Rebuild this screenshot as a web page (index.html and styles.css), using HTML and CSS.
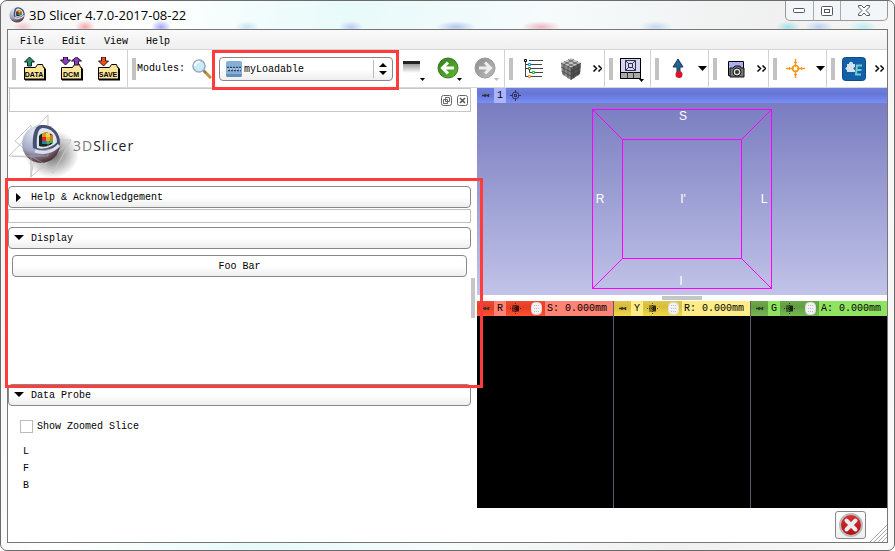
FILE: index.html
```html
<!DOCTYPE html>
<html lang="en">
<head>
<meta charset="utf-8">
<title>3D Slicer 4.7.0-2017-08-22</title>
<link rel="stylesheet" href="styles.css">
</head>
<body>
<svg class="defs" aria-hidden="true">
  <defs>
    <linearGradient id="green" x1="0" y1="0" x2="1" y2="1"><stop offset="0" stop-color="#2f7d1c"/><stop offset="1" stop-color="#62bd2e"/></linearGradient>
    <linearGradient id="gray" x1="0" y1="0" x2="1" y2="1"><stop offset="0" stop-color="#8c8c8c"/><stop offset="1" stop-color="#bcbcbc"/></linearGradient>
    <radialGradient id="ball" cx=".35" cy=".2" r=".9"><stop offset="0" stop-color="#e6eaf6"/><stop offset=".55" stop-color="#a2a8c6"/><stop offset=".85" stop-color="#5d4047"/><stop offset="1" stop-color="#33262e"/></radialGradient>
    <radialGradient id="shade"><stop offset="0" stop-color="#000" stop-opacity=".6"/><stop offset="1" stop-color="#000" stop-opacity="0"/></radialGradient>
    <linearGradient id="red" x1="0" y1="0" x2="0" y2="1"><stop offset="0" stop-color="#d8343a"/><stop offset="1" stop-color="#b30d12"/></linearGradient>
    <linearGradient id="bars" x1="0" y1="0" x2="0" y2="1"><stop offset="0" stop-color="#777"/><stop offset="1" stop-color="#fff"/></linearGradient>
    <g id="folder">
      <path d="M1.500 10.500h11l2-3h5l1 3h1v12h-20z" fill="#fbe59a" stroke="#000"/>
      <path d="M2 22.500h20v-11" fill="none" stroke="#000" stroke-width="2"/>
    </g>
    <g id="pin"><path d="M0 3.500h2M2 3.500h5M3 2v3M6.500 2v3" stroke="#333" fill="none" stroke-width="1.500"/></g>
    <g id="target"><rect x="2.500" y="2.500" width="6" height="6" rx="2" fill="none" stroke="#2b3358"/><rect x="4.500" y="4.500" width="2" height="2" fill="none" stroke="#2b3358"/><path d="M5.500 0v2M5.500 9v2M0 5.500h2M9 5.500h2" stroke="#2b3358"/></g>
    <g id="link"><path d="M5.500 0v11M0 5.500h11" stroke="#000" opacity=".6" stroke-dasharray="1 1"/><rect x="2" y="2" width="7" height="7" rx="1" fill="#000" opacity=".4"/><path d="M6 3h3v5H6z" fill="#000" opacity=".6"/></g>
    <g id="eye"><rect x=".5" y=".5" width="10" height="12" rx="4" fill="#f2f2f2" stroke="#ddd"/><path d="M3 3.500h6M3 6.500h6M3 9.500h6" stroke="#bbb" stroke-dasharray="1 1"/></g>
    <g id="logo">
      <circle cx="20" cy="20" r="19" fill="url(#ball)"/>
      <path d="M12 24C11 12 13 2 20 1c11-1 19 7 19 18-5 6-18 9-27 5z" fill="#465070"/>
      <path d="M16 24C15 12 17 5 21 4c9 0 15 6 15 14-4 5-13 8-20 6z" fill="#dfe5ee"/>
      <path d="M18 22V12c3-4 10-5 14 0v7c-3 3-10 5-14 3z" fill="#17291e"/>
      <path d="M21 9h4v4h-4z" fill="#d89b18"/><path d="M25 9h4v4h-4z" fill="#f8d52b"/><path d="M29 11h3v4h-3z" fill="#e57324"/><path d="M21 13h4v4h-4z" fill="#e42522"/><path d="M25 13h4v4h-4z" fill="#f1a021"/><path d="M29 15h3v4h-3z" fill="#68a927"/><path d="M21 17h4v3h-4z" fill="#237db6"/><path d="M25 17h4v3h-4z" fill="#38a05b"/>
      <path d="M14 27c8 3 18 1 24-6" fill="none" stroke="#dbe0ef" stroke-width="3"/>
    </g>
  </defs>
</svg>

<div class="window">
  <header class="titlebar">
    <svg class="app-icon" width="16" height="16" viewBox="0 0 40 40"><use href="#logo"/></svg>
    <h1>3D Slicer 4.7.0-2017-08-22</h1>
    <div class="caption">
      <button aria-label="Minimize"><svg width="13" height="6"><rect x=".5" y=".5" width="11" height="4" rx="1" fill="#fff" stroke="#556"/></svg></button>
      <button aria-label="Maximize"><svg width="12" height="10"><rect x=".5" y=".5" width="11" height="9" rx="1" fill="#fff" stroke="#556"/><rect x="3.500" y="3.500" width="5" height="3" fill="#fff" stroke="#556"/></svg></button>
      <button class="wide" aria-label="Close"><svg width="12" height="11"><path d="M.5.5h3L6 3 8.500.5h3v1.500L8 5.500l3.500 3.500v1.500h-3L6 8l-2.500 2.500h-3V9L4 5.500.5 2z" fill="#fff" stroke="#556"/></svg></button>
    </div>
  </header>

  <div class="client">
    <nav class="menubar"><button>File</button><button>Edit</button><button>View</button><button>Help</button></nav>

    <div class="toolbar">
      <div class="group">
        <i class="handle"></i>
        <button class="tool" aria-label="Load data"><svg width="24" height="24"><use href="#folder"/><path d="M6.500 0l5 5h-3v4h-4V5h-3z" fill="#23905a" stroke="#123"/><text x="11" y="20" class="tag">DATA</text></svg></button>
        <button class="tool" aria-label="DICOM"><svg width="24" height="24"><use href="#folder"/><path d="M5.500 8l-5-5h3V0h4v3h3zM16.500 0l5 4h-3v4h-4V4h-3z" fill="#8a3fc0" stroke="#213"/><text x="11" y="20" class="tag">DCM</text></svg></button>
        <button class="tool" aria-label="Save"><svg width="24" height="24"><use href="#folder"/><path d="M6.500 9l-5-5h3V0h4v4h3z" fill="#e8531c" stroke="#411"/><text x="11" y="20" class="tag">SAVE</text></svg></button>
      </div>

      <div class="group modules">
        <i class="handle"></i>
        <label for="module">Modules:</label>
        <button class="tool find" aria-label="Find module"><svg width="20" height="20"><path d="M12 12l7 7" stroke="#d08b35" stroke-width="3"/><path d="M11 11l3 3" stroke="#777" stroke-width="2"/><circle cx="7" cy="7" r="6" fill="#c9eafa" stroke="#9aaab5" stroke-width="1.500"/><path d="M3 7a4 4 0 0 1 5-4" stroke="#fff" stroke-width="2" fill="none"/></svg></button>
        <div class="combo">
          <select id="module"><option>myLoadable</option></select>
          <svg class="combo-icon" width="16" height="16"><rect width="16" height="16" rx="2" fill="#86afd8"/><path d="M0 13h16v1a2 2 0 0 1-2 2H2a2 2 0 0 1-2-2z" fill="#638fbd"/><path d="M1 6.500h14M2 9.500h13" stroke="#29425f" stroke-width="1.500" stroke-dasharray="2 1"/><path d="M1 8h14" stroke="#dbe7f2" stroke-dasharray="2 1"/></svg>
          <svg class="combo-arrows" width="14" height="18"><path d="M.5 0v18" stroke="#bbb"/><path d="M6 7l4-4 4 4zM6 11l4 4 4-4z"/></svg>
          <div class="mark mark-combo"></div>
        </div>
        <button class="tool" aria-label="Module history"><svg width="26" height="26"><path d="M4 5h17v12H4z" fill="url(#bars)"/><path d="M4 5h17v3H4z" fill="#222"/><path d="M21 22h5l-2.500 3z"/></svg></button>
        <button class="tool" aria-label="Previous module"><svg width="26" height="26"><circle cx="12" cy="12" r="10" fill="url(#green)" stroke="#347827"/><path d="M18 12H7M12 6.500L6.500 12l5.500 5.500" fill="none" stroke="#fff" stroke-width="3"/><path d="M21 22h5l-2.500 3z"/></svg></button>
        <button class="tool" aria-label="Next module"><svg width="26" height="26"><circle cx="12" cy="12" r="10" fill="url(#gray)" stroke="#999"/><path d="M6 12h11M12 6.500l5.500 5.500-5.500 5.500" fill="none" stroke="#eee" stroke-width="3"/><path d="M21 22h5l-2.500 3z" fill="#bbb"/></svg></button>
      </div>

      <div class="group spaced">
        <i class="handle"></i>
        <button class="tool" aria-label="Subject hierarchy"><svg width="20" height="20"><path d="M2.500 3v14.500M2 5.500h4M2 9.500h4M6.500 10v3.500H9M2 17.500h4M6 1.500h14M8 5.500h11M8 9.500h12M11 13.500h9M8 17.500h11" stroke="#444" fill="none"/><g fill="#fff"><path d="M1.500.5h2v2h-2z" stroke="#000"/><path d="M5.500 4.500h2v2h-2z" stroke="#168be0"/><path d="M5.500 8.500h2v2h-2z" stroke="#16872b"/><path d="M9.500 12.500h2v2h-2z" stroke="#24b632"/><path d="M5.500 16.500h2v2h-2z" stroke="#f08a16"/></g></svg></button>
        <button class="tool" aria-label="Volume rendering"><svg width="22" height="24"><path d="M1 6l10-5 10 5-10 5z" fill="#c4c4c4"/><path d="M1 6l10 5v12L2 17z" fill="#8a8a8a"/><path d="M21 6l-10 5v12l9-6z" fill="#555"/><path d="M4 4.500l10 5v12M8 2.500l10 5v11M18 4.500l-10 5v12M14 2.500l-10 5v11M1 10l10 5 10-5M1.500 14l9.500 5 9.500-5M1 6l10 5 10-5M11 11v12" fill="none" stroke="#333" stroke-width=".6"/></svg></button>
        <button class="more" aria-label="More"><svg width="9" height="7"><path d="M.5.500l3 3-3 3M5.500.500l3 3-3 3" fill="none" stroke="#000" stroke-width="1.500"/></svg></button>
      </div>

      <div class="group">
        <i class="handle"></i>
        <button class="tool" aria-label="Layout"><svg width="25" height="26"><rect x="1.500" y="2.500" width="20" height="20" fill="#d4d5f4" stroke="#000"/><path d="M1.500 16.500h20v6h-20z" fill="#aaa" stroke="#000"/><path d="M8.500 16v6M14.500 16v6M6.500 4.500h10v10h-10zM9.500 7.500h4v4h-4zM6.500 4.500l3 3M16.500 4.500l-3 3M6.500 14.500l3-3M16.500 14.500l-3-3" fill="none" stroke="#334"/><path d="M20 23h5l-2.500 3z"/></svg></button>
      </div>

      <div class="group">
        <i class="handle"></i>
        <button class="tool" aria-label="Place fiducial"><svg width="14" height="20"><path d="M7 0l5 8H9v7H6V8H2z" fill="#24618c" stroke="#173d59"/><circle cx="8" cy="15.500" r="3.500" fill="#d9142b"/></svg></button>
        <button class="more drop" aria-label="Place options"><svg width="9" height="5"><path d="M0 0h9L4.500 5z"/></svg></button>
      </div>

      <div class="group">
        <i class="handle"></i>
        <button class="tool" aria-label="Capture"><svg width="18" height="18"><path d="M1.500 1.500h15v14h-15z" fill="#a9b0eb" stroke="#000"/><path d="M3 8h3l2-2h5l1 2h3v9H3z" fill="#777" stroke="#111"/><circle cx="10" cy="12" r="4" fill="#ddd" stroke="#111"/><circle cx="10" cy="12" r="2" fill="#333"/></svg></button>
        <button class="more" aria-label="More"><svg width="9" height="7"><path d="M.5.500l3 3-3 3M5.500.500l3 3-3 3" fill="none" stroke="#000" stroke-width="1.500"/></svg></button>
      </div>

      <div class="group">
        <i class="handle"></i>
        <button class="tool" aria-label="Crosshair"><svg width="19" height="20"><path d="M9.500 0v8M9.500 11v8M0 9.500h8M11 9.500h8" stroke="#f39a1e" stroke-width="1.500"/><path d="M8 3.500h3M8 15.500h3M3.500 8v3M15.500 8v3" stroke="#f39a1e"/><circle cx="9.500" cy="9.500" r="3" fill="none" stroke="#f39a1e" stroke-width="1.500"/></svg></button>
        <button class="more drop" aria-label="Crosshair options"><svg width="9" height="5"><path d="M0 0h9L4.500 5z"/></svg></button>
      </div>

      <div class="group last">
        <i class="handle"></i>
        <button class="tool" aria-label="Extensions"><svg width="24" height="24"><rect x=".5" y=".5" width="23" height="23" rx="3" fill="#1160a8" stroke="#0b4b8b"/><path d="M5 7h2c0-3 4-3 4 0h2v3c-2 0-2 3 0 3v2H5v-2c-2 0-2-3 0-3z" fill="#d7e2ea"/><path d="M20 8.500h-5l-1 9h5M14.500 13h5" stroke="#73cbd0" stroke-width="2" fill="none"/></svg></button>
        <button class="more" aria-label="More"><svg width="9" height="7"><path d="M.5.500l3 3-3 3M5.500.500l3 3-3 3" fill="none" stroke="#000" stroke-width="1.500"/></svg></button>
      </div>
    </div>

    <main class="workspace">
      <section class="panel">
        <div class="dock-title">
          <button aria-label="Float"><svg width="11" height="11"><rect x=".5" y=".5" width="10" height="10" rx="2" fill="#fff" stroke="#666"/><path d="M4.500 2.500h4v4h-4zM2.500 4.500h4v4h-4z" fill="#fff" stroke="#666"/></svg></button>
          <button aria-label="Close panel"><svg width="11" height="11"><rect x=".5" y=".5" width="10" height="10" rx="2" fill="#fff" stroke="#666"/><path d="M3 3l5 5M8 3l-5 5" stroke="#555" stroke-width="1.500"/></svg></button>
        </div>
        <div class="brand">
          <svg width="64" height="66" viewBox="0 0 64 66">
            <ellipse cx="43" cy="41" rx="27" ry="24" fill="url(#shade)"/>
            <path d="M0 43L39 2v43zM22 64V12L6 28l38 32 18-33H28zM22 64l38-35" fill="none" stroke="#c7c7c7"/>
            <use href="#logo" x="12" y="11"/>
            <path d="M3 43h36V21M22 64V43l22 13 10-12" fill="none" stroke="#bbb" opacity=".5"/>
          </svg>
          <span><span class="thin">3D</span><b>Slicer</b></span>
        </div>
        <div class="module">
          <button class="section"><svg width="10" height="10"><path d="M2 0v9l5-4.500z"/></svg>Help &amp; Acknowledgement</button>
          <div class="collapsed"></div>
          <button class="section"><svg width="10" height="10"><path d="M0 1h10L5 6z"/></svg>Display</button>
          <div class="section-body"><button class="foo">Foo Bar</button></div>
          <div class="mark mark-module"></div>
        </div>
        <div class="probe">
          <button class="section"><svg width="10" height="10"><path d="M0 1h10L5 6z"/></svg>Data Probe</button>
          <label class="check"><input type="checkbox">Show Zoomed Slice</label>
          <ul><li>L</li><li>F</li><li>B</li></ul>
        </div>
      </section>

      <div class="splitter"></div>

      <section class="views">
        <div class="threed">
          <div class="view-bar">
            <span class="cell"><svg width="8" height="7"><use href="#pin"/></svg></span>
            <span class="name">1</span>
            <svg width="11" height="11"><use href="#target"/></svg>
          </div>
          <div class="scene">
            <svg width="182" height="182" viewBox="0 0 182 182">
              <path d="M1.500 1.500h179v179H1.500zM31.500 31.500h119v119h-119z" class="edge"/>
              <path d="M1.500 1.500l30 30M180.500 1.500l-30 30M1.500 180.500l30-30M180.500 180.500l-30-30" class="edge"/>
              <text x="92" y="12">S</text><text x="9" y="95">R</text><text x="173" y="95">L</text><text x="92" y="95">I'</text><text x="90" y="177">I</text>
            </svg>
          </div>
        </div>
        <div class="hsplitter"></div>
        <div class="slices">
          <div class="slice r"><div class="slice-bar"><span class="cell"><svg width="8" height="7"><use href="#pin"/></svg></span><span class="name">R</span><span class="icons"><svg width="11" height="11"><use href="#link"/></svg><svg width="11" height="13"><use href="#eye"/></svg></span><span class="value">S: 0.000mm</span></div></div>
          <div class="slice y"><div class="slice-bar"><span class="cell"><svg width="8" height="7"><use href="#pin"/></svg></span><span class="name">Y</span><span class="icons"><svg width="11" height="11"><use href="#link"/></svg><svg width="11" height="13"><use href="#eye"/></svg></span><span class="value">R: 0.000mm</span></div></div>
          <div class="slice g"><div class="slice-bar"><span class="cell"><svg width="8" height="7"><use href="#pin"/></svg></span><span class="name">G</span><span class="icons"><svg width="11" height="11"><use href="#link"/></svg><svg width="11" height="13"><use href="#eye"/></svg></span><span class="value">A: 0.000mm</span></div></div>
        </div>
      </section>
    </main>

    <footer class="status">
      <button class="errors" aria-label="Error log"><svg width="26" height="26"><circle cx="13" cy="13" r="11" fill="url(#red)" stroke="#bbb" stroke-width="2"/><path d="M8.500 8.500l9 9M17.500 8.500l-9 9" stroke="#eee" stroke-width="4" stroke-linecap="round"/></svg></button>
      <svg class="grip" width="17" height="17"><path d="M0 17L17 0M4 17L17 4M8 17l9-9M12 17l5-5" stroke="#aaa"/></svg>
    </footer>
  </div>
</div>
</body>
</html>
```
FILE: styles.css
```css
* { box-sizing: border-box; }
body { margin: 0; font: 10px/12px "Liberation Mono", monospace; color: #000; }
button, select, input { font: inherit; color: inherit; margin: 0; }
button { padding: 0; border: 0; background: none; display: flex; align-items: center; justify-content: center; }
svg { display: block; flex: none; }
.defs { position: absolute; width: 0; height: 0; }

.window {
  height: 100vh; display: flex; flex-direction: column;
  padding: 0 6px 7px; border: 1px solid #6b6b6b; border-radius: 7px;
  background:
    radial-gradient(ellipse 10px 7px at 84px 26px, #f3a7ac, transparent),
    radial-gradient(ellipse 10px 7px at 160px 26px, #a5a8f6, transparent),
    radial-gradient(ellipse 10px 6px at 22px 26px, #f0c6cf, transparent),
    radial-gradient(ellipse 12px 6px at 246px 26px, #c8e4f4, transparent),
    radial-gradient(ellipse 12px 6px at 350px 26px, #bccdf4, transparent),
    radial-gradient(ellipse 20px 6px at 455px 26px, #b5c7ed, transparent),
    radial-gradient(ellipse 20px 6px at 540px 26px, #edb7c4, transparent),
    radial-gradient(ellipse 16px 6px at 655px 26px, #c5d8f4, transparent),
    radial-gradient(ellipse 12px 6px at 787px 26px, #a3e1e8, transparent),
    radial-gradient(ellipse 14px 6px at 818px 26px, #bcd0f2, transparent),
    radial-gradient(ellipse 14px 6px at 862px 26px, #b7edf2, transparent),
    linear-gradient(100deg, #f2f2f2 0, #fff 15%, #e8fafa 35%, #f6fbfc 55%, #f0f0f0 78%, #fafafa 100%);
}
.titlebar { flex: none; height: 28px; display: flex; align-items: center; padding-left: 2px; }
.titlebar h1 { flex: 1; margin: 0 0 0 4px; font: 13px/16px "Open Sans", sans-serif; }
.caption { align-self: flex-start; display: flex; border: 1px solid #999; border-top: 0; border-radius: 0 0 5px 5px; background: #f3f6f8; }
.caption button { width: 27px; height: 19px; border-left: 1px solid #aaa; }
.caption button:first-child { border-left: 0; }
.caption .wide { width: 47px; }

.client { flex: 1; min-height: 0; display: flex; flex-direction: column; border: 1px solid #777; background: #fff; }
.menubar { flex: none; height: 20px; display: flex; gap: 18px; padding: 4px 0 0 12px; background: linear-gradient(#fafafa, #efefef); border-bottom: 1px solid #d5d5d5; }

.toolbar { flex: none; height: 38px; display: flex; border-bottom: 1px solid #d8d8d8; }
.group { display: flex; align-items: center; padding-left: 4px; border-right: 1px solid #d2d2d2; }
.group.last { border-right: 0; padding-right: 1px; }
.group.spaced { gap: 1px; }
.group.modules { flex: 1; }
.handle { width: 4px; height: 22px; background: #c2c2c2; }
.tool { width: 37px; height: 36px; }
.tool.find { width: 34px; }
.more { width: 14px; height: 36px; }
.more.drop { width: 12px; }
.tag { font: bold 7px "Liberation Sans", sans-serif; text-anchor: middle; }
.modules label { margin-left: 1px; }
.combo { position: relative; flex: 1; height: 24px; }
.combo select { width: 100%; height: 24px; padding: 2px 20px 0 24px; appearance: none; border: 1px solid #888; border-radius: 4px; background: linear-gradient(#fff 50%, #eee); }
.combo-icon { position: absolute; left: 7px; top: 4px; }
.combo-arrows { position: absolute; right: 6px; top: 3px; }
.mark { position: absolute; border: 3px solid #ff3b3b; pointer-events: none; }
.mark-combo { inset: -7px -6px -9px -7px; }

.workspace { flex: 1; min-height: 0; display: grid; grid-template-columns: 463fr 6px 410fr; }
.panel { display: flex; flex-direction: column; }
.dock-title { flex: none; height: 24px; margin-left: 1px; padding-right: 2px; display: flex; align-items: center; justify-content: flex-end; gap: 5px; border: 1px solid #c6c6c6; }
.brand { flex: none; height: 66px; display: flex; align-items: center; margin: 1px 0 7px 1px; font: 14px/18px "Open Sans", sans-serif; letter-spacing: 1px; color: #222; }
.brand svg { overflow: visible; }
.brand b { font-weight: 500; }
.brand .thin { color: #777; }
.module { position: relative; flex: 1; }
.section { width: 100%; height: 22px; padding: 1px 5px 0; justify-content: flex-start; gap: 7px; border: 1px solid #888; border-radius: 4px; background: linear-gradient(#fff 50%, #eee); }
.collapsed { height: 14px; margin: 1px 0 4px; border: 1px solid #c0c0c0; }
.section-body { padding: 6px 4px; }
.foo { width: 100%; height: 22px; padding-top: 1px; border: 1px solid #888; border-radius: 4px; background: linear-gradient(#fff 50%, #eee); }
.mark-module { inset: -8px -12px -4px -3px; z-index: 1; }
.probe { flex: none; padding-bottom: 14px; }
.check { display: flex; align-items: center; gap: 4px; margin: 14px 0 10px 12px; }
.check input { width: 13px; height: 13px; appearance: none; border: 1px solid #bbb; background: #fff; }
.probe ul { margin: 0; padding: 0 0 0 15px; list-style: none; line-height: 17px; }

.splitter { display: flex; align-items: center; }
.splitter::after { content: ""; width: 4px; height: 40px; background: #c6c6c6; }
.views { display: flex; flex-direction: column; }
.threed { flex: 1; display: flex; flex-direction: column; background: linear-gradient(#7477bd, #c1c3e8); }
.view-bar { flex: none; height: 15px; display: flex; align-items: center; background: linear-gradient(#6d80dc, #6576d6 40%, #7b8ef8); }
.cell { width: 17px; display: flex; justify-content: center; }
.name { width: 12px; line-height: 15px; text-align: center; }
.view-bar .name { background: #aab4ff; margin-right: 4px; }
.scene { flex: 1; display: flex; align-items: center; justify-content: center; }
.scene text { fill: #fff; font: 12px "Liberation Sans", sans-serif; text-anchor: middle; }
.edge { fill: none; stroke: #f0f; shape-rendering: crispEdges; }
.hsplitter { flex: none; height: 6px; display: flex; justify-content: center; align-items: center; }
.hsplitter::after { content: ""; width: 40px; height: 4px; background: #c6c6c6; }
.slices { flex: 1; display: grid; grid-template-columns: repeat(3, 1fr); gap: 1px; background: #5c5b6b; }
.slice { background: #000; }
.slice-bar { height: 15px; display: flex; align-items: center; }
.icons { width: 39px; display: flex; align-items: center; justify-content: space-between; padding: 0 3px 0 4px; }
.value { flex: 1; padding-left: 2px; line-height: 15px; white-space: nowrap; }
.r .slice-bar { background: linear-gradient(#ee4c36, #e63c22 40%, #ff5032); }
.r .name, .r .value { background: #ff8473; }
.y .slice-bar { background: linear-gradient(#e0c64a, #d8bd3a 40%, #f2d94c); }
.y .name, .y .value { background: #ffec86; }
.g .slice-bar { background: linear-gradient(#6da84d, #629e40 40%, #77b955); }
.g .name, .g .value { background: #90e360; }

.status { flex: none; position: relative; height: 34px; display: flex; align-items: center; justify-content: flex-end; padding-right: 21px; }
.errors { width: 31px; height: 28px; border: 1px solid #888; border-radius: 3px; background: linear-gradient(#fff, #eee); }
.grip { position: absolute; right: 0; bottom: 0; }
```
